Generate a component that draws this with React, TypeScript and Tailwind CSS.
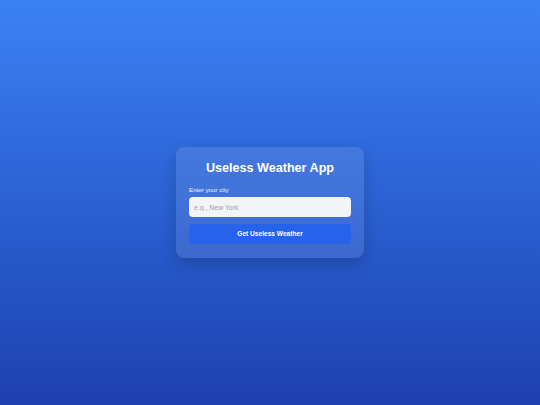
export default function App() {
  return (
    <div
      className="min-h-screen w-full flex items-center justify-center bg-gradient-to-b from-[#3b82f6] to-[#1e40af]"
      style={{ fontFamily: '"Liberation Sans", Arial, sans-serif' }}
    >
      <div className="w-[188px] h-[111px] rounded-[8px] bg-white/10 shadow-[0_6px_16px_rgba(0,0,0,0.18)] px-[13px] pt-[12px]">
        <h1 className="text-center text-white font-bold text-[12.6px] leading-[18px]">Useless Weather App</h1>
        <label className="block mt-[8px] text-[6.2px] leading-[9px] text-white/90">Enter your city</label>
        <input
          className="mt-[3px] block w-full h-[20px] rounded-[4px] bg-[#f3f4f6] px-[5px] text-[6.9px] text-gray-700 placeholder:text-gray-400 outline-none"
          placeholder="e.g., New York"
        />
        <button className="mt-[7px] block w-full h-[20px] rounded-[4px] bg-[#2563eb] text-white font-bold text-[6.6px]">
          Get Useless Weather
        </button>
      </div>
    </div>
  );
}
